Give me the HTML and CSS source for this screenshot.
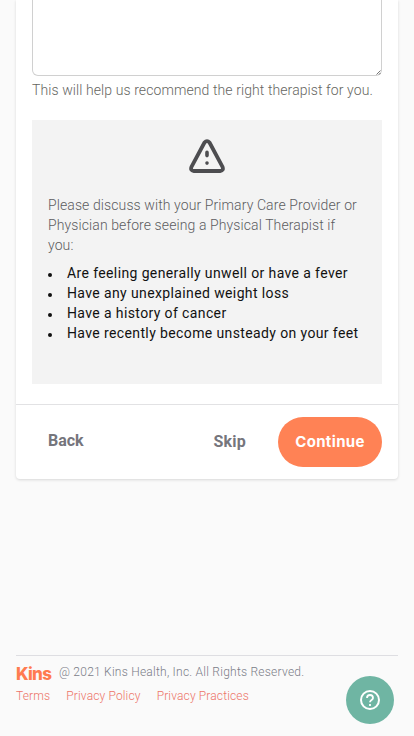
FILE: index.html
```
<!DOCTYPE html>
<html lang="en">
<head>
<meta charset="utf-8">
<meta name="viewport" content="width=device-width, initial-scale=1">
<title>Kins</title>
<link rel="stylesheet" href="styles.css">
</head>
<body>
<main class="card">
  <div class="card-body">
    <div class="field">
      <textarea class="answer" aria-label="Details"></textarea>
      <svg class="grip" viewBox="0 0 5 5" width="5" height="5" stroke="#666" stroke-width=".9"><path d="M.5 4.5 4.5 .5M3 4.5 4.5 3"/></svg>
    </div>
    <p class="hint">This will help us recommend the right therapist for you.</p>
    <section class="notice">
      <svg class="warning" viewBox="0 0 36 34" width="36" height="34" fill="none" stroke="#4d4d50" stroke-width="3.8" stroke-linejoin="round" stroke-linecap="round">
        <path d="M15.5 3.5 2.6 27.6Q.9 31.6 4.8 32H31.2Q35.1 31.6 33.4 27.6L20.5 3.5Q18 .6 15.5 3.5Z"/>
        <path d="M18 13.4V16.6M18 24V24.1" stroke-width="3.6"/>
      </svg>
      <p class="lead">Please discuss with your Primary Care Provider or<br>Physician before seeing a Physical Therapist if<br>you:</p>
      <ul class="conditions">
        <li>Are feeling generally unwell or have a fever</li>
        <li>Have any unexplained weight loss</li>
        <li>Have a history of cancer</li>
        <li>Have recently become unsteady on your feet</li>
      </ul>
    </section>
  </div>
  <div class="actions">
    <button class="link back">Back</button>
    <button class="link skip">Skip</button>
    <button class="primary">Continue</button>
  </div>
</main>
<footer class="footer">
  <div class="legal"><span class="brand">Kins</span><span class="copyright">@ 2021 Kins Health, Inc. All Rights Reserved.</span></div>
  <nav class="links"><a>Terms</a><a>Privacy Policy</a><a>Privacy Practices</a></nav>
</footer>
<button class="help" aria-label="Help">
  <svg viewBox="0 0 20 20" width="20" height="20" fill="none" stroke="#fff" stroke-width="2">
    <circle cx="10" cy="10" r="9"/>
    <path d="M7 8A3 3 0 0 1 13 8C13 10 10 10 10 12.2M10 14V16" stroke-width="1.8"/>
  </svg>
</button>
</body>
</html>
```
FILE: styles.css
```
* { box-sizing: border-box; }
body {
  margin: 0;
  height: 736px;
  padding: 0 16px;
  display: flex;
  flex-direction: column;
  overflow: hidden;
  background: #fafafa;
  font-family: Roboto, "Liberation Sans", sans-serif;
  font-size: 14px;
  line-height: 20px;
}
p, ul { margin: 0; padding: 0; }
button { border: 0; padding: 0; background: none; font: inherit; }
.card {
  width: 382px;
  height: 479px;
  background: #fff;
  border-radius: 0 0 4px 4px;
  box-shadow: 0 1px 3px rgba(0, 0, 0, .14);
}
.card-body { height: 404px; padding: 0 16px; }
.field { position: relative; }
.answer {
  display: block;
  width: 350px;
  height: 76px;
  border: 1px solid #d0d0d0;
  border-top: 0;
  border-radius: 0 0 6px 6px;
  background: #fff;
  resize: none;
}
.grip { position: absolute; right: 1px; bottom: 1px; }
.hint {
  margin-top: 4px;
  color: #66665f;
  font-weight: 300;
  letter-spacing: .09px;
  white-space: nowrap;
}
.notice {
  height: 264px;
  margin-top: 20px;
  padding: 19px 16px 0;
  background: #f3f3f3;
}
.warning { display: block; margin: 0 auto 22px; }
.lead { color: #5c5c5f; font-weight: 300; letter-spacing: .1px; white-space: nowrap; }
.conditions {
  margin-top: 8px;
  list-style: none;
  color: #111;
  letter-spacing: .38px;
  white-space: nowrap;
}
.conditions li { display: flex; align-items: center; }
.conditions li::before {
  content: "";
  width: 4px;
  height: 4px;
  margin-right: 15px;
  margin-top: 3px;
  border-radius: 50%;
  background: #111;
}
.actions {
  height: 75px;
  padding: 0 16px;
  display: flex;
  align-items: center;
  border-top: 1px solid #e2e2e4;
}
.link { color: #75757c; font-size: 16px; font-weight: 700; margin-top: -2px; }
.back { margin-left: 16px; margin-right: auto; }
.skip { margin-right: 32px; margin-top: 0; letter-spacing: .2px; }
.primary {
  width: 104px;
  height: 50px;
  border-radius: 25px;
  background: #ff8255;
  color: #fff;
  font-family: Inter, sans-serif;
  font-size: 15px;
  font-weight: 700;
  letter-spacing: .35px;
}
.footer {
  width: 382px;
  margin-top: 176px;
  padding-top: 6px;
  border-top: 1px solid #dedee2;
  font-size: 12px;
  font-weight: 300;
  letter-spacing: .24px;
  white-space: nowrap;
}
.legal { display: flex; align-items: center; height: 22px; color: #7b7d88; }
.copyright { margin-top: -2px; }
.brand {
  width: 43px;
  color: #ff7b50;
  font-family: Inter, sans-serif;
  font-size: 17px;
  font-weight: 800;
  letter-spacing: -.7px;
  margin-top: 1px;
}
.links { display: flex; gap: 16px; margin-top: 2px; color: #ed7468; letter-spacing: .14px; }
.help {
  position: fixed;
  left: 346px;
  top: 676px;
  width: 48px;
  height: 48px;
  display: flex;
  align-items: center;
  justify-content: center;
  border-radius: 50%;
  background: #6fb5a3;
}
```
